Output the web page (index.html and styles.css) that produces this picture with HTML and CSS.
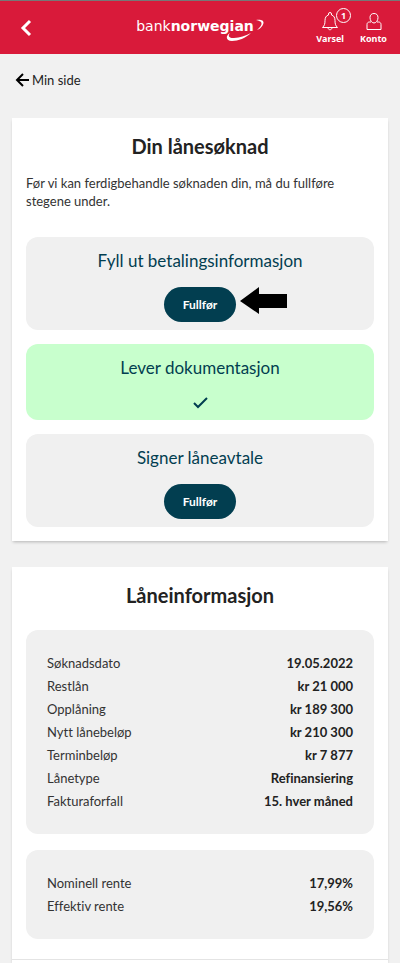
FILE: index.html
```html
<!DOCTYPE html>
<html lang="no">
<head>
    <meta charset="utf-8">
    <meta name="viewport" content="width=device-width, initial-scale=1">
    <title>Min side</title>
    <link rel="stylesheet" href="styles.css">
</head>
<body>
    <header class="topbar">
        <button type="button" class="back-button" aria-label="Tilbake">
            <svg width="12" height="18" viewBox="0 0 12 18" fill="none" stroke="currentColor" stroke-width="3"><path d="M10 2L3 9l7 7"/></svg>
        </button>
        <a href="#" class="logo">
            <span class="logo-text">bank<b>norwegian</b></span>
            <svg class="logo-swoosh" width="38" height="26" viewBox="0 0 38 26" fill="currentColor">
                <path d="M30 3C34 2 38 3 37.500 6C37 9 34 12 31 13C34 10 36 8 35.500 6C35 4 33 4 30 3Z"/>
                <path d="M4 16C2 18 2 21 8 21C14 20.500 19 19 25 16C20 21 12 24 6 24C0 24-1 19 4 16Z"/>
            </svg>
        </a>
        <nav class="topbar-links">
            <a href="#">
                <svg width="18" height="20" viewBox="0 0 18 20" fill="none" stroke="currentColor"><path d="M7.500 4V3a1.500 1.500 0 0 1 3 0v1C13 4.500 14 7 14 9.500c0 3.500.5 5 2.500 7h-15c2-2 2.500-3.500 2.500-7C4 7 5 4.500 7.500 4zM7 16.500c0 3 4 3 4 0"/></svg>
                <span class="badge">1</span>
                Varsel
            </a>
            <a href="#">
                <svg width="18" height="20" viewBox="0 0 18 20" fill="none" stroke="currentColor"><path d="M9 2.500c2.500 0 4 1.500 4 4S11.500 12 9 12s-4-3-4-5.500 1.500-4 4-4zM6 11H4.500c-1.500 0-2.500 1-2.500 2.500v5h14v-5c0-1.500-1-2.500-2.500-2.500H12"/></svg>
                Konto
            </a>
        </nav>
    </header>

    <a href="#" class="breadcrumb">
        <svg width="14" height="14" viewBox="0 0 14 14" fill="none" stroke="#000" stroke-width="2"><path d="M14 7H2M8 1L2 7l6 6"/></svg>
        Min side
    </a>

    <main>
        <section class="card">
            <h1>Din lånesøknad</h1>
            <p>Før vi kan ferdigbehandle søknaden din, må du fullføre stegene under.</p>
            <div class="steps">
                <div class="step">
                    <h2>Fyll ut betalingsinformasjon</h2>
                    <div class="step-action">
                        <button type="button" class="btn">Fullfør</button>
                        <svg class="pointer" width="47" height="27" viewBox="0 0 47 27"><path d="M0 14L19 0v7h28v14H19v6z"/></svg>
                    </div>
                </div>
                <div class="step done">
                    <h2>Lever dokumentasjon</h2>
                    <svg width="18" height="18" viewBox="0 0 18 18" fill="none" stroke="currentColor" stroke-width="2"><path d="M3 9l4 4 9-9"/></svg>
                </div>
                <div class="step">
                    <h2>Signer låneavtale</h2>
                    <button type="button" class="btn">Fullfør</button>
                </div>
            </div>
        </section>

        <section class="card loan-card">
            <h1>Låneinformasjon</h1>
            <div class="info-box">
                <table>
                    <tr><th scope="row">Søknadsdato</th><td>19.05.2022</td></tr>
                    <tr><th scope="row">Restlån</th><td>kr 21 000</td></tr>
                    <tr><th scope="row">Opplåning</th><td>kr 189 300</td></tr>
                    <tr><th scope="row">Nytt lånebeløp</th><td>kr 210 300</td></tr>
                    <tr><th scope="row">Terminbeløp</th><td>kr 7 877</td></tr>
                    <tr><th scope="row">Lånetype</th><td>Refinansiering</td></tr>
                    <tr><th scope="row">Fakturaforfall</th><td>15. hver måned</td></tr>
                </table>
            </div>
            <div class="info-box">
                <table>
                    <tr><th scope="row">Nominell rente</th><td>17,99%</td></tr>
                    <tr><th scope="row">Effektiv rente</th><td>19,56%</td></tr>
                </table>
            </div>
            <hr>
        </section>
    </main>
</body>
</html>
```
FILE: styles.css
```css
* {
    box-sizing: border-box;
}
body {
    margin: 0;
    min-height: 100vh;
    display: flex;
    flex-direction: column;
    background-color: #f1f1f1;
    color: #333;
    font-family: Lato, sans-serif;
    font-size: 13px;
    line-height: 18px;
    font-variant-ligatures: none;
}
a {
    color: inherit;
    text-decoration: none;
}
button {
    border: none;
    font: inherit;
    cursor: pointer;
}
svg {
    display: block;
}
.topbar {
    display: grid;
    grid-template-columns: 1fr auto 1fr;
    align-items: center;
    height: 54px;
    padding: 0 13px;
    border-top: 1px solid #777;
    background-color: #d91a3a;
    color: #fff;
}
.back-button {
    justify-self: start;
    padding: 0 7px;
    background: none;
    color: #fff;
}
.logo {
    position: relative;
    padding-bottom: 4px;
}
.logo-text {
    display: block;
    padding-right: 10px;
    font-family: "DejaVu Sans", sans-serif;
    font-size: 14px;
}
.logo-swoosh {
    position: absolute;
    right: 0;
    top: 0;
}
.topbar-links {
    display: flex;
    justify-self: end;
    gap: 16px;
    font-family: "Noto Sans", sans-serif;
    font-size: 9px;
    font-weight: 700;
    line-height: 12px;
}
.topbar-links a {
    position: relative;
    display: flex;
    flex-direction: column;
    align-items: center;
    gap: 2px;
}
.badge {
    position: absolute;
    top: -3px;
    right: -7px;
    width: 15px;
    height: 15px;
    border: 1px solid #fff;
    border-radius: 50%;
    background-color: #d91a3a;
    line-height: 13px;
    text-align: center;
}
.breadcrumb {
    display: flex;
    align-items: center;
    gap: 3px;
    padding: 17px 15px 0;
    color: #222;
}
main {
    flex: 1;
    display: flex;
    flex-direction: column;
    gap: 26px;
    padding: 29px 12px 0;
}
.card {
    padding: 16px 14px 14px;
    background-color: #fff;
    box-shadow: 0 2px 3px -1px rgba(0,0,0,0.25);
}
h1 {
    margin: 0;
    color: #222;
    font-size: 20px;
    font-weight: 700;
    line-height: 24px;
    text-align: center;
}
p {
    margin: 16px 0 27px;
}
.steps {
    display: flex;
    flex-direction: column;
    gap: 14px;
}
.step {
    display: flex;
    flex-direction: column;
    align-items: center;
    gap: 14px;
    padding: 12px 12px 8px;
    border-radius: 12px;
    background-color: #f0f0f0;
    color: #023e50;
}
.step.done {
    background-color: #c8ffcd;
}
h2 {
    margin: 0;
    font-size: 17px;
    font-weight: 400;
    line-height: 24px;
}
.step-action {
    position: relative;
}
.pointer {
    position: absolute;
    left: 100%;
    top: 0;
    margin-left: 4px;
}
.btn {
    display: block;
    height: 35px;
    min-width: 72px;
    padding: 0 12px;
    border-radius: 18px;
    background-color: #023e50;
    color: #fff;
    font-size: 12px;
    font-weight: 700;
}
.loan-card {
    flex: 1;
    padding-bottom: 0;
}
.info-box {
    margin-top: 16px;
    padding: 22px 21px 21px;
    border-radius: 12px;
    background-color: #f0f0f0;
}
h1 + .info-box {
    margin-top: 23px;
}
table {
    width: 100%;
    border-collapse: collapse;
}
th, td {
    padding: 0;
    line-height: 23px;
}
th {
    font-weight: 400;
    text-align: left;
}
td {
    color: #222;
    font-weight: 700;
    text-align: right;
}
hr {
    margin: 20px -14px 3px;
    border: none;
    border-top: 1px solid #e4e4e4;
}
```
